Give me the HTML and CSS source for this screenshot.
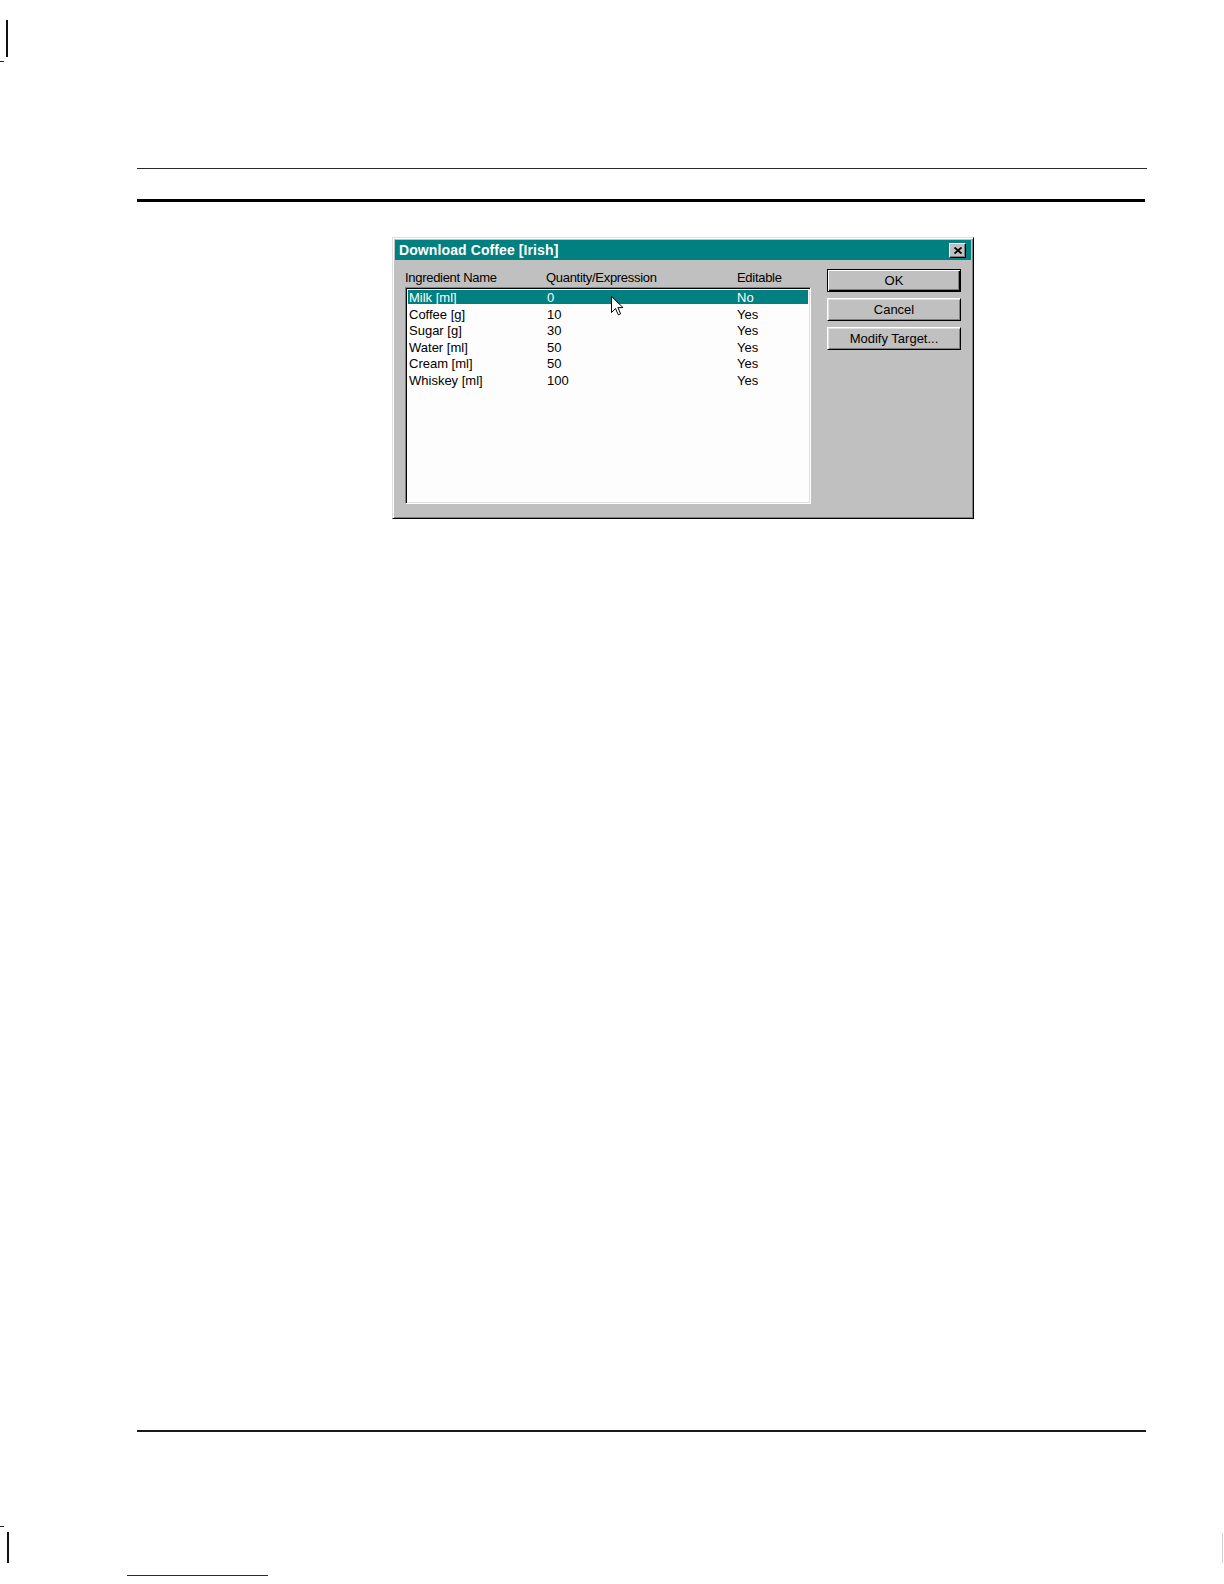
FILE: index.html
```html
<!DOCTYPE html>
<html lang="en">
<head>
<meta charset="utf-8">
<title>Download Coffee [Irish]</title>
<link rel="stylesheet" href="styles.css">
</head>
<body>
<div class="page">
  <div class="mark-top"></div>
  <div class="tick"></div>
  <div class="rule-thin"></div>
  <div class="rule-thick"></div>

  <div class="dialog">
    <div class="titlebar">
      <span class="title">Download Coffee [Irish]</span>
      <span class="close-btn">
        <svg width="8" height="7" viewBox="0 0 8 7"><path d="M0.5 0.5 L7.5 6.5 M7.5 0.5 L0.5 6.5" stroke="#000" stroke-width="1.8" fill="none"/></svg>
      </span>
    </div>
    <div class="dialog-body">
      <div class="list-col">
        <div class="list-head">
          <span>Ingredient Name</span>
          <span>Quantity/Expression</span>
          <span>Editable</span>
        </div>
        <div class="listbox">
          <div class="row selected"><span>Milk [ml]</span><span>0</span><span>No</span></div>
          <div class="row"><span>Coffee [g]</span><span>10</span><span>Yes</span></div>
          <div class="row"><span>Sugar [g]</span><span>30</span><span>Yes</span></div>
          <div class="row"><span>Water [ml]</span><span>50</span><span>Yes</span></div>
          <div class="row"><span>Cream [ml]</span><span>50</span><span>Yes</span></div>
          <div class="row"><span>Whiskey [ml]</span><span>100</span><span>Yes</span></div>
          <svg class="cursor" width="13" height="20" viewBox="0 0 13 20"><path d="M0.5 0.5 L0.5 16.5 L4.5 12.5 L7.3 18.8 L9.6 17.8 L6.9 11.6 L12 11.6 Z" fill="#fff" stroke="#000" stroke-width="1" stroke-linejoin="miter"/></svg>
        </div>
      </div>
      <div class="btn-col">
        <div class="btn default"><span>OK</span></div>
        <div class="btn"><span>Cancel</span></div>
        <div class="btn"><span>Modify Target...</span></div>
      </div>
    </div>
  </div>

  <div class="rule-bottom"></div>
  <div class="tick tick-bottom"></div>
  <div class="foot-row">
    <div class="mark-bottom"></div>
    <div class="blue-line"></div>
    <div class="faint-line"></div>
  </div>
</div>
</body>
</html>
```

FILE: styles.css
```css
html, body {
  margin: 0;
  padding: 0;
  background: #ffffff;
}

body {
  font-family: "Liberation Sans", Arial, sans-serif;
  color: #000;
  overflow: hidden;
}

.page {
  width: 1224px;
  height: 1584px;
  display: flex;
  flex-direction: column;
  align-items: flex-start;
}

.mark-top {
  margin: 20px 0 0 6px;
  width: 2px;
  height: 37px;
  background: #111;
}

.tick {
  margin-top: 4px;
  width: 4px;
  height: 1px;
  background: #222;
}

.rule-thin {
  margin: 106px 0 0 137px;
  width: 1010px;
  height: 1px;
  background: #2a2a2a;
}

.rule-thick {
  margin: 30px 0 0 137px;
  width: 1008px;
  height: 3px;
  background: #000;
}

/* ---------- dialog ---------- */
.dialog {
  margin: 35px 0 0 392px;
  width: 582px;
  height: 282px;
  box-sizing: border-box;
  background: #c0c0c0;
  border: 1px solid;
  border-color: #dfdfdf #000 #000 #dfdfdf;
  box-shadow: inset 1px 1px 0 #fff, inset -1px -1px 0 #808080;
  padding: 2px;
  display: flex;
  flex-direction: column;
}

.titlebar {
  height: 20px;
  background: #008080;
  display: flex;
  align-items: center;
  justify-content: space-between;
  padding: 0 5px 0 4px;
}

.title {
  color: #fff;
  font-weight: bold;
  font-size: 14px;
  letter-spacing: 0.1px;
  line-height: 20px;
  white-space: nowrap;
}

.close-btn {
  width: 17px;
  height: 15px;
  box-sizing: border-box;
  background: #c0c0c0;
  border: 1px solid;
  border-color: #fff #000 #000 #fff;
  box-shadow: inset -1px -1px 0 #808080;
  display: flex;
  align-items: center;
  justify-content: center;
  margin-top: 1px;
}

.dialog-body {
  flex: 1;
  display: flex;
  gap: 16px;
  padding: 9px 10px 12px 10px;
}

.list-col {
  display: flex;
  flex-direction: column;
  width: 406px;
}

.list-head {
  margin-top: 1px;
  height: 15px;
  line-height: 15px;
  font-size: 13px;
  letter-spacing: -0.3px;
  padding-left: 0;
  display: grid;
  grid-template-columns: 141px 191px 1fr;
  white-space: nowrap;
}

.listbox {
  position: relative;
  margin-top: 2px;
  height: 217px;
  box-sizing: border-box;
  background: #fdfdfd;
  border: 1px solid;
  border-color: #808080 #fff #fff #808080;
  box-shadow: inset 1px 1px 0 #000, inset -1px -1px 0 #dfdfdf;
  padding: 2px 2px 0 2px;
}

.row {
  height: 16.6px;
  box-sizing: border-box;
  line-height: 15px;
  font-size: 13px;
  padding-left: 1px;
  display: grid;
  grid-template-columns: 138px 190px 1fr;
  white-space: nowrap;
}

.row.selected {
  color: #fff;
  background: linear-gradient(#008080, #008080) top left / 100% 14px no-repeat;
}

.cursor {
  position: absolute;
  left: 205px;
  top: 8px;
}

.btn-col {
  display: flex;
  flex-direction: column;
  gap: 6px;
  width: 134px;
}

.btn {
  height: 23px;
  box-sizing: border-box;
  background: #c0c0c0;
  border: 1px solid;
  border-color: #fff #000 #000 #fff;
  box-shadow: inset 1px 1px 0 #dfdfdf, inset -1px -1px 0 #808080;
  display: flex;
  align-items: center;
  justify-content: center;
  font-size: 13px;
  white-space: nowrap;
}

.btn.default {
  border: 1px solid #000;
  box-shadow: inset 1px 1px 0 #fff, inset -1px -1px 0 #000, inset -2px -2px 0 #808080;
}

/* ---------- footer ---------- */
.rule-bottom {
  margin: 911px 0 0 137px;
  width: 1009px;
  height: 2px;
  background: #1a1a1a;
}

.tick-bottom {
  margin-top: 94px;
}

.foot-row {
  margin-top: 5px;
  width: 1224px;
  height: 44px;
  display: flex;
  align-items: flex-start;
}

.mark-bottom {
  margin-left: 7px;
  width: 2px;
  height: 31px;
  background: #111;
}

.blue-line {
  margin: 43px 0 0 118px;
  width: 141px;
  height: 1px;
  background: #1c1c8c;
}

.faint-line {
  margin: 1px 0 0 954px;
  width: 1px;
  height: 30px;
  background: #d0d0d0;
}
```
